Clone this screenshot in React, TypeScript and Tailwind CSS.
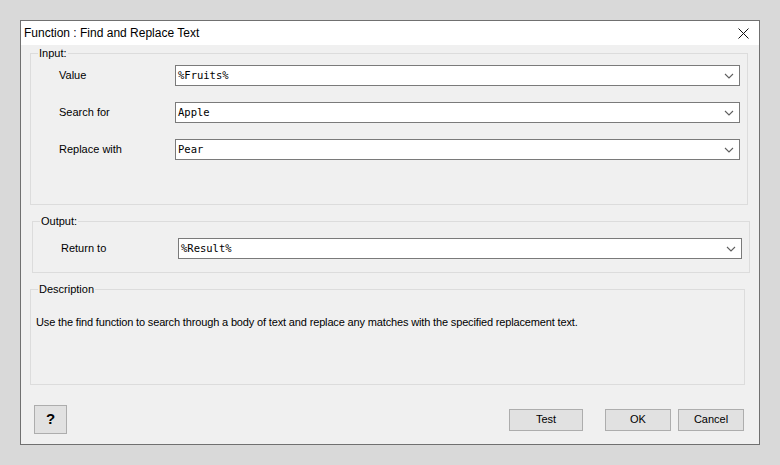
import React from 'react'

const ui = { fontFamily: '"Liberation Sans", Arial, sans-serif' }
const mono = { fontFamily: '"DejaVu Sans Mono", "Liberation Mono", monospace' }

function Chevron() {
  return (
    <svg width="10" height="6" viewBox="0 0 10 6" className="shrink-0">
      <path d="M1 1 L5 5 L9 1" fill="none" stroke="#5f5f5f" strokeWidth="1.1" />
    </svg>
  )
}

function Combo({ value }: { value: string }) {
  return (
    <div className="flex-1 h-[21px] bg-white border border-[#7a7a7a] flex items-center pl-[2px] pr-[5px]">
      <span className="flex-1 text-[10.5px] text-black leading-none" style={mono}>{value}</span>
      <Chevron />
    </div>
  )
}

function Row({ label, value, labelWidth }: { label: string; value: string; labelWidth: string }) {
  return (
    <div className="flex items-center">
      <div className={`${labelWidth} text-[11px] text-black`}>{label}</div>
      <Combo value={value} />
    </div>
  )
}

function Group({ title, className, children }: { title: string; className: string; children?: React.ReactNode }) {
  return (
    <fieldset className={`border border-[#dcdcdc] ${className}`}>
      <legend className="ml-[7px] px-[1px] text-[11px] leading-[16px] text-black">{title}</legend>
      {children}
    </fieldset>
  )
}

function Btn({ children, className }: { children: React.ReactNode; className: string }) {
  return (
    <button className={`bg-[#e1e1e1] border border-[#adadad] text-[11px] text-black flex items-center justify-center ${className}`}>
      {children}
    </button>
  )
}

export default function App() {
  return (
    <div className="w-[780px] h-[465px] bg-[#d9d9d9] p-[20px]" style={ui}>
      <div className="w-[740px] h-[425px] border border-[#707070] bg-[#f0f0f0] flex flex-col">
        <div className="h-[24px] bg-white flex items-center justify-between pl-[3px] pr-[10px]">
          <span className="text-[12px] text-black">Function : Find and Replace Text</span>
          <svg width="11" height="11" viewBox="0 0 11 11">
            <path d="M0.5 0.5 L10.5 10.5 M10.5 0.5 L0.5 10.5" stroke="#111" strokeWidth="1" />
          </svg>
        </div>

        <Group title="Input:" className="ml-[9px] mr-[11px] h-[160px]">
          <div className="flex flex-col gap-[16px] mt-[4px] pl-[28px] pr-[7px]">
            <Row label="Value" value="%Fruits%" labelWidth="w-[116px]" />
            <Row label="Search for" value="Apple" labelWidth="w-[116px]" />
            <Row label="Replace with" value="Pear" labelWidth="w-[116px]" />
          </div>
        </Group>

        <Group title="Output:" className="ml-[11px] mr-[9px] mt-[8px] h-[60px]">
          <div className="mt-[9px] pl-[28px] pr-[7px]">
            <Row label="Return to" value="%Result%" labelWidth="w-[117px]" />
          </div>
        </Group>

        <Group title="Description" className="ml-[9px] mr-[14px] mt-[8px] h-[104px]">
          <p className="mt-[17px] pl-[5px] text-[11px] leading-[16px] text-black tracking-[-0.15px]">
            Use the find function to search through a body of text and replace any matches with the specified replacement text.
          </p>
        </Group>

        <div className="flex items-center mt-[20px] pl-[13px] pr-[15px]">
          <Btn className="w-[33px] h-[29px] text-[15px] font-bold">?</Btn>
          <div className="flex-1" />
          <Btn className="w-[74px] h-[22px]">Test</Btn>
          <Btn className="w-[66px] h-[22px] ml-[22px]">OK</Btn>
          <Btn className="w-[66px] h-[22px] ml-[7px]">Cancel</Btn>
        </div>
      </div>
    </div>
  )
}
